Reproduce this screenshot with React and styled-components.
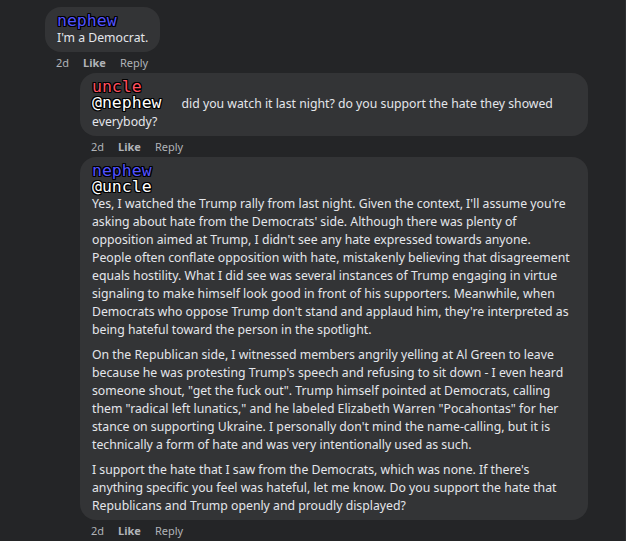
import React from "react";
import styled, { createGlobalStyle } from "styled-components";

const Global = createGlobalStyle`
  html, body { margin: 0; padding: 0; background: #242527; }
  body { font-family: "Noto Sans", "Open Sans", sans-serif; }
`;

const Page = styled.div`
  width: 626px;
  height: 541px;
  box-sizing: border-box;
  padding: 7px 0 0 45px;
  background: #242527;
  border-right: 1px solid #2e2f31;
  overflow: hidden;
`;

const Column = styled.div`
  width: 543px;
  display: flex;
  flex-direction: column;
`;

const Replies = styled.div`
  padding-left: 35px;
  display: flex;
  flex-direction: column;
`;

const Comment = styled.div`
  display: flex;
  flex-direction: column;
  align-items: flex-start;
`;

const Bubble = styled.div`
  background: #333436;
  border-radius: 16px;
  padding: 5px ${(p) => (p.$full ? "16px" : "12px")} 5px 12px;
  width: ${(p) => (p.$full ? "100%" : "fit-content")};
  box-sizing: border-box;
  color: #e4e6eb;
  font-size: 12.25px;
  line-height: 18px;
`;

const outline = `
  text-shadow: 1px 0 0 #000, -1px 0 0 #000, 0 1px 0 #000, 0 -1px 0 #000,
    1px 1px 0 #000, -1px -1px 0 #000, 1px -1px 0 #000, -1px 1px 0 #000;
`;

const Name = styled.div`
  font-family: "DejaVu Sans Mono", "Liberation Mono", monospace;
  font-size: 16.5px;
  line-height: 17px;
  color: ${(p) => p.$color};
  ${outline}
`;

const Mention = styled.span`
  font-family: "DejaVu Sans Mono", "Liberation Mono", monospace;
  font-size: 16.5px;
  line-height: 16px;
  color: #ffffff;
  display: ${(p) => (p.$block ? "block" : "inline")};
  margin-right: ${(p) => (p.$block ? "0" : "20px")};
  ${outline}
`;

const Para = styled.p`
  margin: 0;
  & + & { margin-top: 7px; }
`;

const Actions = styled.div`
  display: flex;
  gap: 14px;
  padding-left: 11px;
  margin: 2px 0 3px;
  height: 16px;
  align-items: center;
  font-size: 11px;
  color: #b0b3b8;
`;

const Action = styled.span`
  font-weight: ${(p) => (p.$bold ? 700 : 400)};
`;

const ActionRow = () => (
  <Actions>
    <Action>2d</Action>
    <Action $bold>Like</Action>
    <Action>Reply</Action>
  </Actions>
);

export default function App() {
  return (
    <>
      <Global />
      <Page>
        <Column>
          <Comment>
            <Bubble>
              <Name $color="#5252ff">nephew</Name>
              <Para>I'm a Democrat.</Para>
            </Bubble>
            <ActionRow />
          </Comment>
          <Replies>
            <Comment>
              <Bubble $full>
                <Name $color="#ff4f5e">uncle</Name>
                <Para>
                  <Mention>@nephew</Mention>did you watch it last night? do you
                  support the hate they showed everybody?
                </Para>
              </Bubble>
              <ActionRow />
            </Comment>
            <Comment>
              <Bubble $full>
                <Name $color="#5252ff">nephew</Name>
                <Mention $block>@uncle</Mention>
                <Para>
                  Yes, I watched the Trump rally from last night. Given the
                  context, I'll assume you're asking about hate from the
                  Democrats' side. Although there was plenty of opposition aimed
                  at Trump, I didn't see any hate expressed towards anyone.
                  People often conflate opposition with hate, mistakenly
                  believing that disagreement equals hostility. What I did see
                  was several instances of Trump engaging in virtue signaling to
                  make himself look good in front of his supporters. Meanwhile,
                  when Democrats who oppose Trump don't stand and applaud him,
                  they're interpreted as being hateful toward the person in the
                  spotlight.
                </Para>
                <Para>
                  On the Republican side, I witnessed members angrily yelling at
                  Al Green to leave because he was protesting Trump's speech and
                  refusing to sit down - I even heard someone shout, "get the
                  fuck out". Trump himself pointed at Democrats, calling them
                  "radical left lunatics," and he labeled Elizabeth Warren
                  "Pocahontas" for her stance on supporting Ukraine. I
                  personally don't mind the name-calling, but it is technically
                  a form of hate and was very intentionally used as such.
                </Para>
                <Para>
                  I support the hate that I saw from the Democrats, which was
                  none. If there's anything specific you feel was hateful, let
                  me know. Do you support the hate that Republicans and Trump
                  openly and proudly displayed?
                </Para>
              </Bubble>
              <ActionRow />
            </Comment>
          </Replies>
        </Column>
      </Page>
    </>
  );
}
